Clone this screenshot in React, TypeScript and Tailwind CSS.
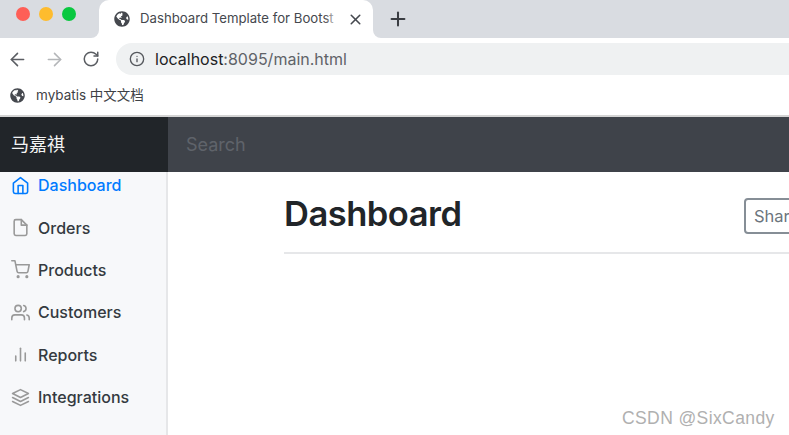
import { ReactNode } from 'react'
import { ArrowLeft, ArrowRight, RotateCw, Info, X, Plus } from 'lucide-react'
import { FaGlobeAmericas } from 'react-icons/fa'

const navItems: { label: string; icon: ReactNode }[] = [
  {
    label: 'Dashboard',
    icon: (
      <>
        <path d="M3 9l9-7 9 7v11a2 2 0 0 1-2 2H5a2 2 0 0 1-2-2z" />
        <polyline points="9 22 9 12 15 12 15 22" />
      </>
    )
  },
  {
    label: 'Orders',
    icon: (
      <>
        <path d="M13 2H6a2 2 0 0 0-2 2v16a2 2 0 0 0 2 2h12a2 2 0 0 0 2-2V9z" />
        <polyline points="13 2 13 9 20 9" />
      </>
    )
  },
  {
    label: 'Products',
    icon: (
      <>
        <circle cx="9" cy="21" r="1" />
        <circle cx="20" cy="21" r="1" />
        <path d="M1 1h4l2.68 13.39a2 2 0 0 0 2 1.61h9.72a2 2 0 0 0 2-1.61L23 6H6" />
      </>
    )
  },
  {
    label: 'Customers',
    icon: (
      <>
        <path d="M17 21v-2a4 4 0 0 0-4-4H5a4 4 0 0 0-4 4v2" />
        <circle cx="9" cy="7" r="4" />
        <path d="M23 21v-2a4 4 0 0 0-3-3.87" />
        <path d="M16 3.13a4 4 0 0 1 0 7.75" />
      </>
    )
  },
  {
    label: 'Reports',
    icon: (
      <>
        <line x1="18" y1="20" x2="18" y2="10" />
        <line x1="12" y1="20" x2="12" y2="4" />
        <line x1="6" y1="20" x2="6" y2="14" />
      </>
    )
  },
  {
    label: 'Integrations',
    icon: (
      <>
        <polygon points="12 2 2 7 12 12 22 7 12 2" />
        <polyline points="2 17 12 22 22 17" />
        <polyline points="2 12 12 17 22 12" />
      </>
    )
  }
]

export default function App() {
  return (
    <div className="relative flex h-[435px] w-[789px] flex-col overflow-hidden bg-white font-['Inter','Noto_Sans_CJK_SC',sans-serif]">
      {/* Tab strip */}
      <div className="flex h-[38px] shrink-0 items-center bg-[#d9dce1]">
        <div className="flex w-[99px] shrink-0 gap-[9px] pb-[10px] pl-4">
          <span className="h-[14px] w-[14px] rounded-full bg-[#fe5f57]" />
          <span className="h-[14px] w-[14px] rounded-full bg-[#febc2e]" />
          <span className="h-[14px] w-[14px] rounded-full bg-[#09c840]" />
        </div>
        <div className="relative flex h-[38px] w-[274px] shrink-0 items-center rounded-t-[10px] bg-white pl-[15px]">
          {/* curved feet of the active tab */}
          <span className="absolute bottom-0 -left-2 h-2 w-2 bg-white">
            <span className="block h-full w-full rounded-br-[8px] bg-[#d9dce1]" />
          </span>
          <span className="absolute bottom-0 -right-2 h-2 w-2 bg-white">
            <span className="block h-full w-full rounded-bl-[8px] bg-[#d9dce1]" />
          </span>
          <FaGlobeAmericas className="h-4 w-4 shrink-0 text-[#45484e]" />
          <span className="relative ml-[10px] w-[200px] overflow-hidden whitespace-nowrap text-[13.2px] text-[#45484e]">
            Dashboard Template for Bootst
            <span className="absolute inset-y-0 right-0 w-4 bg-gradient-to-r from-transparent to-white" />
          </span>
          <X className="ml-[7px] h-[17px] w-[17px] text-[#45484e]" strokeWidth={2.2} />
        </div>
        <Plus className="ml-[14px] h-[22px] w-[22px] text-[#3a3d42]" strokeWidth={2.2} />
      </div>

      {/* Address bar */}
      <div className="flex h-[42px] shrink-0 items-center pl-[7px]">
        <ArrowLeft className="h-[21px] w-[21px] text-[#5b5e63]" strokeWidth={1.8} />
        <ArrowRight className="ml-[16px] h-[21px] w-[21px] text-[#b4b6b9]" strokeWidth={1.8} />
        <RotateCw className="ml-[17px] h-[18px] w-[18px] text-[#5b5e63]" strokeWidth={2} />
        <div className="ml-[16px] flex h-[32px] flex-1 items-center rounded-l-full bg-[#eff1f2] pl-[13px]">
          <Info className="h-[16px] w-[16px] text-[#55585d]" strokeWidth={2} />
          <span className="ml-[10px] text-[16px] text-[#5f6368]">
            <span className="text-[#202124]">localhost</span>:8095/main.html
          </span>
        </div>
      </div>

      {/* Bookmarks */}
      <div className="flex h-[35px] shrink-0 items-center pb-1 pl-[10px]">
        <FaGlobeAmericas className="h-[15px] w-[15px] text-[#45484e]" />
        <span className="ml-[11px] text-[13.5px] text-[#3e4146]">mybatis 中文文档</span>
      </div>
      <div className="h-[2px] shrink-0 bg-[#d4d4d4]" />

      {/* Navbar */}
      <div className="flex h-[55px] shrink-0">
        <div className="flex w-[168px] items-center bg-[#212529] pl-[11px] text-[18px] text-[#f4f4f4]">马嘉祺</div>
        <div className="flex flex-1 items-center bg-[#3f434a] pl-[18px] text-[18px] text-[#5f636a]">Search</div>
      </div>

      <div className="flex min-h-0 flex-1">
        {/* Sidebar */}
        <div className="w-[168px] shrink-0 overflow-hidden border-r-2 border-[#e6e7e9] bg-[#f7f8fa]">
          <ul className="-mt-2">
            {navItems.map((item, idx) => (
              <li
                key={item.label}
                className={`flex h-[42.4px] items-center pl-[11px] text-[16px] font-medium ${
                  idx === 0 ? 'text-[#007bff]' : 'text-[#343a40]'
                }`}
              >
                <svg
                  viewBox="0 0 24 24"
                  fill="none"
                  stroke="currentColor"
                  strokeWidth={2}
                  strokeLinecap="round"
                  strokeLinejoin="round"
                  className={`h-[19px] w-[19px] shrink-0 ${idx === 0 ? 'text-[#007bff]' : 'text-[#999]'}`}
                >
                  {item.icon}
                </svg>
                <span className="ml-[8px]">{item.label}</span>
              </li>
            ))}
          </ul>
        </div>

        {/* Main */}
        <div className="min-w-0 flex-1 overflow-hidden pl-[116px]">
          <div className="flex h-[82px] w-[600px] items-center border-b-2 border-[#e6e7e9] pt-1">
            <h1 className="w-[460px] shrink-0 text-[34.5px] leading-none font-semibold tracking-[-0.5px] text-[#212529]">
              Dashboard
            </h1>
            <button className="mt-1 h-[36px] shrink-0 rounded-[4px] border-2 border-[#868e96] px-[8px] text-[16.5px] text-[#6c757d]">
              Share
            </button>
          </div>
        </div>
      </div>

      {/* CSDN watermark */}
      <span className="absolute left-[622px] top-[405px] font-['Liberation_Sans',sans-serif] text-[17.5px] tracking-[0.4px] text-[#b0b0b0]">
        CSDN @SixCandy
      </span>
    </div>
  )
}
